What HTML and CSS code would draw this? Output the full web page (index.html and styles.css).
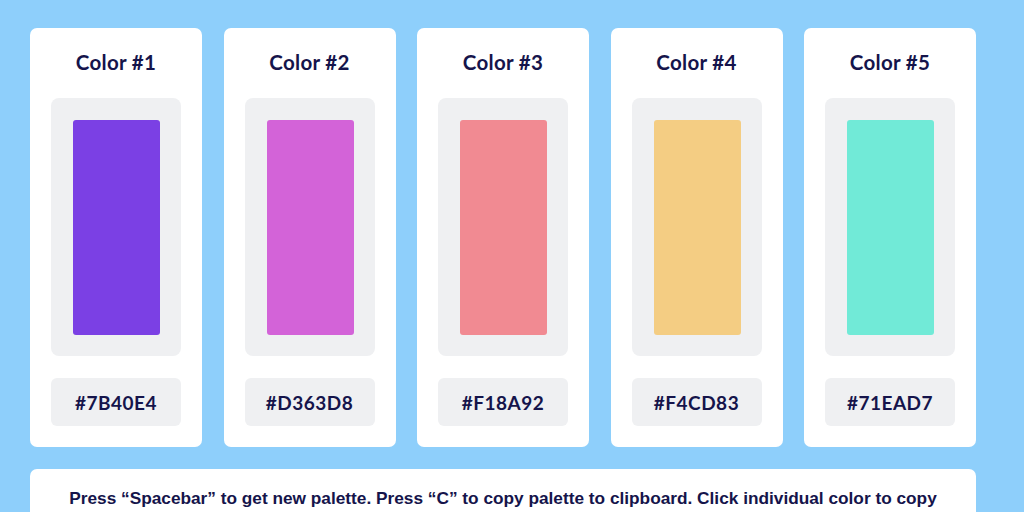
FILE: index.html
```html
<!DOCTYPE html>
<html>
<head>
<meta charset="utf-8">
<link rel="stylesheet" href="styles.css">
</head>
<body>
<div class="page">
  <div class="cards">
    <div class="card">
      <div class="title">Color #1</div>
      <div class="well"><div class="swatch" style="background:#7B40E4"></div></div>
      <div class="hex">#7B40E4</div>
    </div>
    <div class="card">
      <div class="title">Color #2</div>
      <div class="well"><div class="swatch" style="background:#D363D8"></div></div>
      <div class="hex">#D363D8</div>
    </div>
    <div class="card">
      <div class="title">Color #3</div>
      <div class="well"><div class="swatch" style="background:#F18A92"></div></div>
      <div class="hex">#F18A92</div>
    </div>
    <div class="card">
      <div class="title">Color #4</div>
      <div class="well"><div class="swatch" style="background:#F4CD83"></div></div>
      <div class="hex">#F4CD83</div>
    </div>
    <div class="card">
      <div class="title">Color #5</div>
      <div class="well"><div class="swatch" style="background:#71EAD7"></div></div>
      <div class="hex">#71EAD7</div>
    </div>
  </div>
  <div class="help">Press “Spacebar” to get new palette. Press “C” to copy palette to clipboard. Click individual color to copy</div>
</div>
</body>
</html>
```

FILE: styles.css
```css
html, body {
  margin: 0;
  padding: 0;
  background: #8ecffb;
  overflow: hidden;
}
.page {
  width: 946px;
  padding: 28px 48px 0 30px;
  display: flex;
  flex-direction: column;
  gap: 22px;
}
.cards {
  display: flex;
  gap: 21.5px;
}
.card {
  flex: 1;
  background: #fff;
  border-radius: 7px;
  padding: 20px 21px 21px;
  display: flex;
  flex-direction: column;
}
.title {
  font-family: Lato, "Open Sans", sans-serif;
  font-weight: 700;
  font-size: 20.5px;
  line-height: 28px;
  height: 28px;
  text-align: center;
  color: #15144b;
  letter-spacing: 0.3px;
}
.well {
  margin-top: 22px;
  height: 258px;
  background: #eff0f2;
  border-radius: 8px;
  padding: 22px 21px 21px 22px;
  box-sizing: border-box;
  display: flex;
}
.swatch {
  flex: 1;
  border-radius: 3px;
}
.hex {
  margin-top: 22px;
  height: 48px;
  background: #eff0f2;
  border-radius: 6px;
  display: flex;
  align-items: center;
  justify-content: center;
  font-family: Lato, "Open Sans", sans-serif;
  font-weight: 700;
  font-size: 19px;
  color: #15144b;
  letter-spacing: 0.5px;
}
.help {
  background: #fff;
  border-radius: 7px;
  height: 80px;
  padding-top: 19px;
  box-sizing: border-box;
  text-align: center;
  font-family: "Liberation Sans", Arial, sans-serif;
  font-weight: 700;
  font-size: 17.25px;
  color: #15144b;
}
```
